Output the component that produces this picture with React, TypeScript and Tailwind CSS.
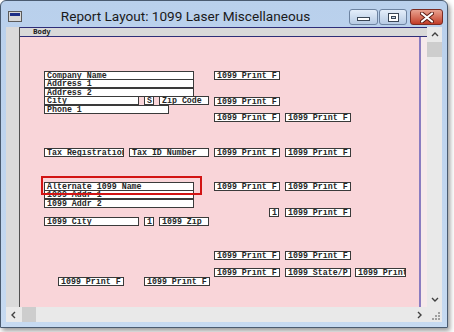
import React from 'react'

type Field = { x: number; y: number; w: number; label: string; h?: number; top?: boolean }

// page coords, converted to canvas coords (canvas origin at 20,37)
const FIELDS: Field[] = [
  { x: 44, y: 71, w: 150, label: 'Company Name' },
  { x: 44, y: 79, w: 150, label: 'Address 1' },
  { x: 44, y: 88, w: 150, label: 'Address 2' },
  { x: 44, y: 96, w: 95, label: 'City' },
  { x: 144, y: 96, w: 10, label: 'S' },
  { x: 159, y: 96, w: 50, label: 'Zip Code' },
  { x: 44, y: 105, w: 125, label: 'Phone 1' },
  { x: 214, y: 71, w: 66, label: '1099 Print F' },
  { x: 214, y: 97, w: 66, label: '1099 Print F' },
  { x: 214, y: 113, w: 66, label: '1099 Print F' },
  { x: 285, y: 113, w: 66, label: '1099 Print F' },
  { x: 44, y: 148, w: 80, label: 'Tax Registration' },
  { x: 129, y: 148, w: 80, label: 'Tax ID Number' },
  { x: 214, y: 148, w: 66, label: '1099 Print F' },
  { x: 285, y: 148, w: 66, label: '1099 Print F' },
  { x: 44, y: 190, w: 150, label: '1099 Addr 1' },
  { x: 44, y: 182, w: 150, h: 9, label: 'Alternate 1099 Name', top: true },
  { x: 214, y: 182, w: 66, label: '1099 Print F' },
  { x: 285, y: 182, w: 66, label: '1099 Print F' },
  { x: 44, y: 199, w: 150, label: '1099 Addr 2' },
  { x: 269, y: 208, w: 10, label: '1' },
  { x: 285, y: 208, w: 66, label: '1099 Print F' },
  { x: 44, y: 217, w: 95, label: '1099 City' },
  { x: 144, y: 217, w: 10, label: '1' },
  { x: 159, y: 217, w: 50, label: '1099 Zip' },
  { x: 214, y: 251, w: 66, label: '1099 Print F' },
  { x: 285, y: 251, w: 66, label: '1099 Print F' },
  { x: 214, y: 268, w: 66, label: '1099 Print F' },
  { x: 285, y: 268, w: 66, label: '1099 State/P' },
  { x: 355, y: 268, w: 51, label: '1099 Print' },
  { x: 58, y: 277, w: 66, label: '1099 Print F' },
  { x: 144, y: 277, w: 66, label: '1099 Print F' },
]

function Chevron({ dir }: { dir: 'up' | 'down' | 'left' | 'right' }) {
  const pts = {
    up: '1,5 4,2 7,5',
    down: '1,2 4,5 7,2',
    left: '5,1 2,4 5,7',
    right: '2,1 5,4 2,7',
  }[dir]
  return (
    <svg width="8" height="8" viewBox="0 0 8 8">
      <polyline points={pts} fill="none" stroke="#404040" strokeWidth="1.4" />
    </svg>
  )
}

export default function App() {
  return (
    <div className="w-[454px] h-[332px] bg-white" style={{ fontFamily: '"Noto Sans", sans-serif' }}>
      <div className="w-[448px] h-[328px] flex flex-col rounded-t-[6px] border border-[#4a5b70] bg-gradient-to-b from-[#b9d0ec] to-[#c6daf1] shadow-[2px_3px_5px_rgba(0,0,0,0.4)]">
        {/* title bar */}
        <div className="h-[26px] flex items-start pl-[7px] pr-[4px]">
          <div className="mt-[10px] w-[14px] h-[11px] border border-[#5a5a5a] bg-[#d8d8d8] p-[1px]">
            <div className="h-[3px] bg-[#1c2e86]" />
          </div>
          <div
            className="flex-1 text-center text-[13.6px] leading-[20px] mt-[5px] text-[#1a1a1a]"
            style={{ fontFamily: 'Roboto, sans-serif' }}
          >
            Report Layout: 1099 Laser Miscellaneous
          </div>
          <div className="flex mt-[8px] gap-[1px]">
            <div className="w-[29px] h-[16px] rounded-[3px] border border-[#6d83a1] bg-gradient-to-b from-[#e4eefa] to-[#b7cbe4] flex items-center justify-center">
              <div className="w-[13px] h-[4px] mt-[3px] border border-[#3a4656] bg-white" />
            </div>
            <div className="w-[28px] h-[16px] rounded-[3px] border border-[#6d83a1] bg-gradient-to-b from-[#e4eefa] to-[#b7cbe4] flex items-center justify-center">
              <div className="w-[11px] h-[9px] border border-[#3a4656] bg-white p-[2px]">
                <div className="w-full h-full border border-[#3a4656] bg-[#c8d6e8]" />
              </div>
            </div>
            <div className="ml-[2px] w-[33px] h-[16px] rounded-[3px] border border-[#7a2b22] bg-gradient-to-b from-[#e8a190] to-[#c23a25] flex items-center justify-center">
              <svg width="14" height="11" viewBox="0 0 14 11">
                <path d="M2 1.5 L12 9.5 M12 1.5 L2 9.5" stroke="#5a1a12" strokeWidth="4" strokeLinecap="round" />
                <path d="M2 1.5 L12 9.5 M12 1.5 L2 9.5" stroke="#ffffff" strokeWidth="2.2" strokeLinecap="round" />
              </svg>
            </div>
          </div>
        </div>

        {/* client area */}
        <div className="flex-1 mx-[5px] mb-[5px] flex flex-col bg-[#f0f0f0]">
          <div className="flex-1 flex">
            <div className="w-[13px] bg-[#dadada]" />
            <div className="w-[409px] flex flex-col border-l border-[#505050]">
              <div className="h-[10px] border-y border-[#2e2e78] bg-[#d9d9d9] pl-[13px] text-[7px] leading-[8px] font-bold text-[#202020]">
                Body
              </div>
              <div className="flex-1 flex">
                <div className="relative flex-1 bg-[#f9d5d9] overflow-hidden">
                  {FIELDS.map((f, i) => (
                    <div
                      key={i}
                      className={`absolute bg-white border border-[#3a3a3a] overflow-hidden whitespace-nowrap pl-[2px] text-[8.3px] leading-[7px] font-bold text-[#262626] ${f.top ? 'z-10' : ''}`}
                      style={{ left: f.x - 20, top: f.y - 37, width: f.w, height: f.h ?? 9, fontFamily: '"Liberation Mono", monospace' }}
                    >
                      {f.label}
                    </div>
                  ))}
                  <div className="absolute left-[21px] top-[139px] w-[161px] h-[19px] border-2 border-[#d21414] z-20" />
                </div>
                <div className="w-[2px] bg-[#8a7cc0]" />
                <div className="w-[6px] bg-[#f6e9eb]" />
              </div>
            </div>
            {/* vertical scrollbar */}
            <div className="w-[15px] flex flex-col items-center bg-[#e9e9e9]">
              <div className="h-[15px] flex items-center justify-center">
                <Chevron dir="up" />
              </div>
              <div className="w-[15px] h-[15px] bg-[#cdcdcd]" />
              <div className="flex-1" />
              <div className="h-[15px] flex items-center justify-center">
                <Chevron dir="down" />
              </div>
            </div>
          </div>
          {/* horizontal scrollbar */}
          <div className="h-[15px] flex items-center bg-[#e9e9e9]">
            <div className="w-[16px] flex justify-center">
              <Chevron dir="left" />
            </div>
            <div className="w-[14px] h-[15px] bg-[#cdcdcd]" />
            <div className="flex-1" />
            <div className="w-[12px] flex justify-center">
              <Chevron dir="right" />
            </div>
            <div className="w-[16px] h-[15px] flex items-end justify-end pr-[2px] pb-[2px]">
              <svg width="8" height="8" viewBox="0 0 8 8">
                <g fill="#a0a0a0">
                  <rect x="6" y="0" width="2" height="2" />
                  <rect x="3" y="3" width="2" height="2" />
                  <rect x="6" y="3" width="2" height="2" />
                  <rect x="0" y="6" width="2" height="2" />
                  <rect x="3" y="6" width="2" height="2" />
                  <rect x="6" y="6" width="2" height="2" />
                </g>
              </svg>
            </div>
          </div>
        </div>
      </div>
    </div>
  )
}
